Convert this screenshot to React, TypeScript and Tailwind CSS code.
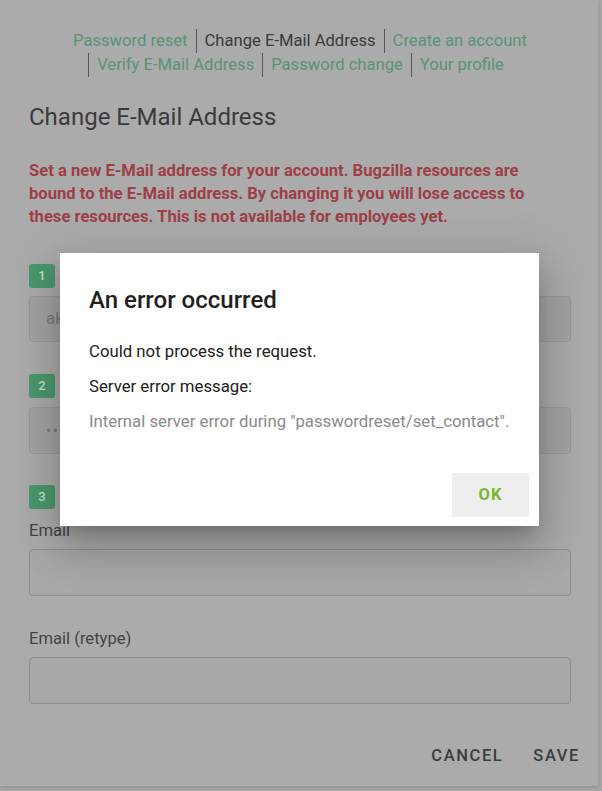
import React from "react";

const links = [
  { t: "Password reset", active: false },
  { t: "Change E-Mail Address", active: true },
  { t: "Create an account", active: false },
  { t: "Verify E-Mail Address", active: false },
  { t: "Password change", active: false },
  { t: "Your profile", active: false },
];

function Badge({ n }: { n: number }) {
  return (
    <div className="flex h-6 w-[26px] items-center justify-center rounded-[3px] bg-[#4a996d] text-[13px] font-medium text-[#c9ddd0]">
      {n}
    </div>
  );
}

export default function App() {
  return (
    <div
      className="relative h-[791px] w-[602px] overflow-hidden bg-[#a6a6a6]"
      style={{ fontFamily: "Roboto, 'Liberation Sans', sans-serif" }}
    >
      <div className="h-[786px] w-[598px] bg-[#ababab] pl-[29px] pr-[27px] pt-[29px] shadow-[0_1px_4px_rgba(0,0,0,0.15)]">
        <nav className="flex flex-wrap justify-center text-[16.6px] leading-6">
          {links.map((l, i) => (
            <span
              key={l.t}
              className={
                (i === 0 ? "" : "border-l border-[#5a5a5a] ") +
                "px-2 " +
                (l.active ? "text-[#3a3a3a]" : "text-[#579574]")
              }
            >
              {l.t}
            </span>
          ))}
        </nav>

        <h1 className="mt-[24px] text-[24px] leading-8 text-[#3b3b3b]">Change E-Mail Address</h1>

        <p className="mt-[26px] pr-[30px] text-[16.6px] font-bold leading-[23px] text-[#9e3f48]">
          Set a new E-Mail address for your account. Bugzilla resources are bound to the E-Mail
          address. By changing it you will lose access to these resources. This is not available
          for employees yet.
        </p>

        <div className="mt-[36px]">
          <Badge n={1} />
          <div className="mt-2 flex h-[46px] items-center rounded-[4px] border border-[#999999] bg-[#a3a3a3] px-4 text-[17px] text-[#7a7a7a]">
            ak
          </div>
        </div>

        <div className="mt-[32px]">
          <Badge n={2} />
          <div className="mt-[9px] flex h-[47px] items-center rounded-[4px] border border-[#999999] bg-[#a3a3a3] px-4 text-[16px] tracking-[1px] text-[#7a7a7a]">
            •••••••••
          </div>
        </div>

        <div className="mt-[31px]">
          <Badge n={3} />
          <div className="mt-[10px] text-[16.6px] leading-6 text-[#444444]">Email</div>
          <div className="mt-[6px] h-[47px] rounded-[4px] border border-[#8e8e8e] bg-[#a8a8a8]" />
          <div className="mt-[31px] text-[16.6px] leading-6 text-[#444444]">Email (retype)</div>
          <div className="mt-[6px] h-[47px] rounded-[4px] border border-[#8e8e8e] bg-[#a8a8a8]" />
        </div>

        <div className="mt-[34px] mr-[-17px] flex justify-end gap-[14px]">
          <button className="h-9 px-[8px] text-[16.5px] font-medium tracking-[1.6px] text-[#3c3c3c]">
            CANCEL
          </button>
          <button className="h-9 px-[8px] text-[16.5px] font-medium tracking-[1.6px] text-[#3c3c3c]">
            SAVE
          </button>
        </div>
      </div>

      <div className="absolute inset-0">
        <div className="absolute left-[60px] top-[253px] w-[479px] bg-white pt-[31px] shadow-[0_11px_15px_-7px_rgba(0,0,0,0.2),0_24px_38px_3px_rgba(0,0,0,0.14),0_9px_46px_8px_rgba(0,0,0,0.12)]">
          <h2 className="px-[29px] text-[24px] font-medium leading-8 text-[#212121]">An error occurred</h2>
          <div className="mt-[23px] px-[29px] pb-[40px] text-[16.75px] leading-6">
            <p className="text-[#212121]">Could not process the request.</p>
            <p className="mt-[11px] text-[#212121]">Server error message:</p>
            <p className="mt-[11px] text-[#8a8a8a]">
              Internal server error during "passwordreset/set_contact".
            </p>
          </div>
          <div className="flex justify-end px-[10px] pb-[9px]">
            <button className="h-[44px] w-[77px] rounded-[2px] bg-[#eeeeee] text-[16.5px] font-bold tracking-[1px] text-[#7ab632]">
              OK
            </button>
          </div>
        </div>
      </div>
    </div>
  );
}
